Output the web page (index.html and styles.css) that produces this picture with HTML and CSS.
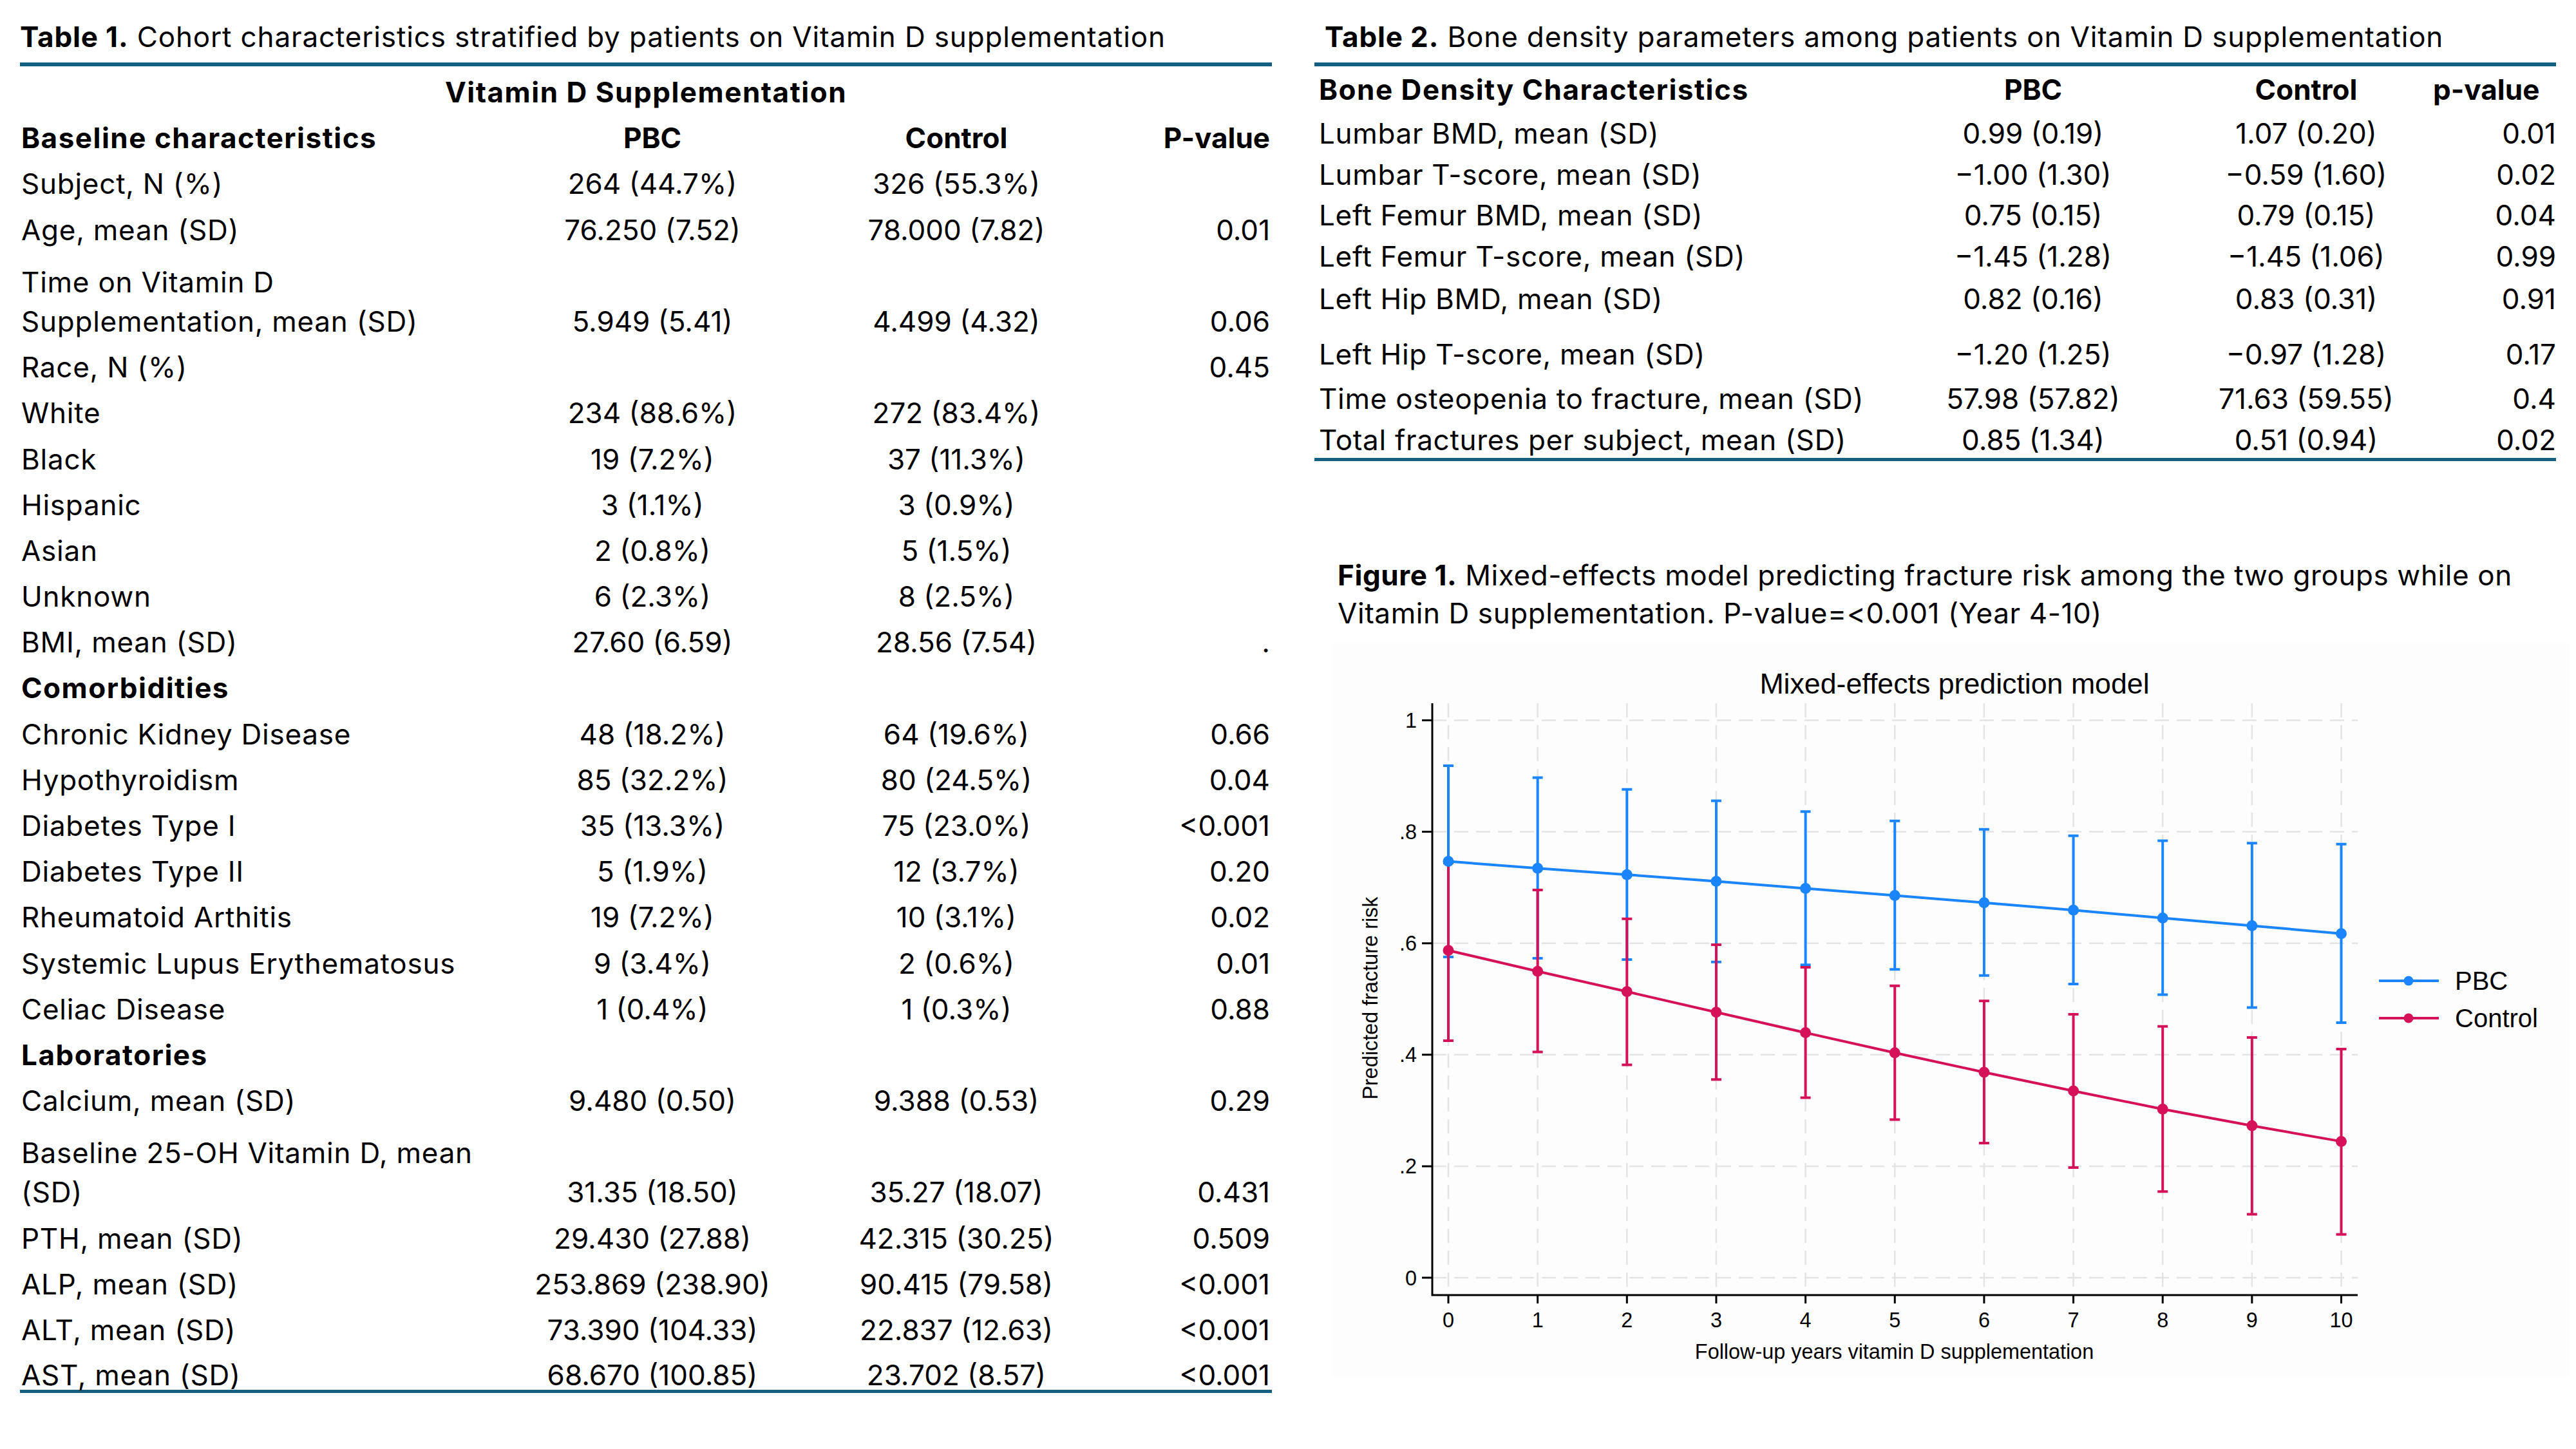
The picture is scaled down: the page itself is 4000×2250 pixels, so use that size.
FILE: index.html
```html
<!DOCTYPE html>
<html lang="en">
<head>
<meta charset="utf-8">
<title>Vitamin D supplementation tables</title>
<link rel="stylesheet" href="styles.css">
</head>
<body>
<div class="page">
  <section class="col1">
    <div class="title"><b>Table 1.</b> Cohort characteristics stratified by patients on Vitamin D supplementation</div>
    <div class="rule t1wrap">
      <table class="t1">
        <colgroup><col class="c1a"><col class="c1b"><col class="c1c"><col class="c1d"></colgroup>
        <tr class="r"><td colspan="4" class="center b vds">Vitamin D Supplementation</td></tr>
        <tr class="r b"><td class="lbl">Baseline characteristics</td><td class="center">PBC</td><td class="center">Control</td><td class="pv">P-value</td></tr>
        <tr class="r"><td class="lbl">Subject, N (%)</td><td class="center">264 (44.7%)</td><td class="center">326 (55.3%)</td><td class="pv"></td></tr>
        <tr class="r"><td class="lbl">Age, mean (SD)</td><td class="center">76.250 (7.52)</td><td class="center">78.000 (7.82)</td><td class="pv">0.01</td></tr>
        <tr class="dbl"><td class="lbl">Time on Vitamin D<br>Supplementation, mean (SD)</td><td class="center">5.949 (5.41)</td><td class="center">4.499 (4.32)</td><td class="pv">0.06</td></tr>
        <tr class="r"><td class="lbl">Race, N (%)</td><td class="center"></td><td class="center"></td><td class="pv">0.45</td></tr>
        <tr class="r"><td class="lbl">White</td><td class="center">234 (88.6%)</td><td class="center">272 (83.4%)</td><td class="pv"></td></tr>
        <tr class="r"><td class="lbl">Black</td><td class="center">19 (7.2%)</td><td class="center">37 (11.3%)</td><td class="pv"></td></tr>
        <tr class="r"><td class="lbl">Hispanic</td><td class="center">3 (1.1%)</td><td class="center">3 (0.9%)</td><td class="pv"></td></tr>
        <tr class="r"><td class="lbl">Asian</td><td class="center">2 (0.8%)</td><td class="center">5 (1.5%)</td><td class="pv"></td></tr>
        <tr class="r"><td class="lbl">Unknown</td><td class="center">6 (2.3%)</td><td class="center">8 (2.5%)</td><td class="pv"></td></tr>
        <tr class="r"><td class="lbl">BMI, mean (SD)</td><td class="center">27.60 (6.59)</td><td class="center">28.56 (7.54)</td><td class="pv">.</td></tr>
        <tr class="r b"><td class="lbl">Comorbidities</td><td></td><td></td><td></td></tr>
        <tr class="r"><td class="lbl">Chronic Kidney Disease</td><td class="center">48 (18.2%)</td><td class="center">64 (19.6%)</td><td class="pv">0.66</td></tr>
        <tr class="r"><td class="lbl">Hypothyroidism</td><td class="center">85 (32.2%)</td><td class="center">80 (24.5%)</td><td class="pv">0.04</td></tr>
        <tr class="r"><td class="lbl">Diabetes Type I</td><td class="center">35 (13.3%)</td><td class="center">75 (23.0%)</td><td class="pv">&lt;0.001</td></tr>
        <tr class="r"><td class="lbl">Diabetes Type II</td><td class="center">5 (1.9%)</td><td class="center">12 (3.7%)</td><td class="pv">0.20</td></tr>
        <tr class="r"><td class="lbl">Rheumatoid Arthitis</td><td class="center">19 (7.2%)</td><td class="center">10 (3.1%)</td><td class="pv">0.02</td></tr>
        <tr class="r"><td class="lbl">Systemic Lupus Erythematosus</td><td class="center">9 (3.4%)</td><td class="center">2 (0.6%)</td><td class="pv">0.01</td></tr>
        <tr class="r"><td class="lbl">Celiac Disease</td><td class="center">1 (0.4%)</td><td class="center">1 (0.3%)</td><td class="pv">0.88</td></tr>
        <tr class="r b"><td class="lbl">Laboratories</td><td></td><td></td><td></td></tr>
        <tr class="r"><td class="lbl">Calcium, mean (SD)</td><td class="center">9.480 (0.50)</td><td class="center">9.388 (0.53)</td><td class="pv">0.29</td></tr>
        <tr class="dbl"><td class="lbl">Baseline 25-OH Vitamin D, mean<br>(SD)</td><td class="center">31.35 (18.50)</td><td class="center">35.27 (18.07)</td><td class="pv">0.431</td></tr>
        <tr class="r"><td class="lbl">PTH, mean (SD)</td><td class="center">29.430 (27.88)</td><td class="center">42.315 (30.25)</td><td class="pv">0.509</td></tr>
        <tr class="r"><td class="lbl">ALP, mean (SD)</td><td class="center">253.869 (238.90)</td><td class="center">90.415 (79.58)</td><td class="pv">&lt;0.001</td></tr>
        <tr class="r"><td class="lbl">ALT, mean (SD)</td><td class="center">73.390 (104.33)</td><td class="center">22.837 (12.63)</td><td class="pv">&lt;0.001</td></tr>
        <tr class="last"><td class="lbl">AST, mean (SD)</td><td class="center">68.670 (100.85)</td><td class="center">23.702 (8.57)</td><td class="pv">&lt;0.001</td></tr>
      </table>
    </div>
  </section>

  <section class="col2">
    <div class="title title2"><b>Table 2.</b> Bone density parameters among patients on Vitamin D supplementation</div>
    <div class="rule t2wrap">
      <table class="t2">
        <colgroup><col class="c2a"><col class="c2b"><col class="c2c"><col class="c2d"></colgroup>
        <tr class="h2 b"><td class="lbl2">Bone Density Characteristics</td><td class="center">PBC</td><td class="center">Control</td><td class="pv2 pvh">p-value</td></tr>
        <tr class="ra"><td class="lbl2">Lumbar BMD, mean (SD)</td><td class="center">0.99 (0.19)</td><td class="center">1.07 (0.20)</td><td class="pv2">0.01</td></tr>
        <tr class="ra"><td class="lbl2">Lumbar T-score, mean (SD)</td><td class="center">&minus;1.00 (1.30)</td><td class="center">&minus;0.59 (1.60)</td><td class="pv2">0.02</td></tr>
        <tr class="rb"><td class="lbl2">Left Femur BMD, mean (SD)</td><td class="center">0.75 (0.15)</td><td class="center">0.79 (0.15)</td><td class="pv2">0.04</td></tr>
        <tr class="rc"><td class="lbl2">Left Femur T-score, mean (SD)</td><td class="center">&minus;1.45 (1.28)</td><td class="center">&minus;1.45 (1.06)</td><td class="pv2">0.99</td></tr>
        <tr class="rc"><td class="lbl2">Left Hip BMD, mean (SD)</td><td class="center">0.82 (0.16)</td><td class="center">0.83 (0.31)</td><td class="pv2">0.91</td></tr>
        <tr class="rd"><td class="lbl2">Left Hip T-score, mean (SD)</td><td class="center">&minus;1.20 (1.25)</td><td class="center">&minus;0.97 (1.28)</td><td class="pv2">0.17</td></tr>
        <tr class="re"><td class="lbl2">Time osteopenia to fracture, mean (SD)</td><td class="center">57.98 (57.82)</td><td class="center">71.63 (59.55)</td><td class="pv2">0.4</td></tr>
        <tr class="rf"><td class="lbl2">Total fractures per subject, mean (SD)</td><td class="center">0.85 (1.34)</td><td class="center">0.51 (0.94)</td><td class="pv2">0.02</td></tr>
      </table>
    </div>

    <p class="caption"><b>Figure 1.</b> Mixed-effects model predicting fracture risk among the two groups while on<br>Vitamin D supplementation. P-value=&lt;0.001 (Year 4-10)</p>

    <svg class="chart" width="1922" height="1140" viewBox="2068 998 1922 1140" xmlns="http://www.w3.org/2000/svg">
      <rect class="chart-bg" x="2068" y="998" width="1922" height="1140"/>
      <text class="ch-title" x="3035" y="1077" text-anchor="middle">Mixed-effects prediction model</text>
      <g class="grid">
        <path d="M2224 1984H3661M2224 1810.9H3661M2224 1637.8H3661M2224 1464.7H3661M2224 1291.6H3661M2224 1118.5H3661"/>
        <path d="M2249 1092V2011M2387.65 1092V2011M2526.3 1092V2011M2664.95 1092V2011M2803.6 1092V2011M2942.25 1092V2011M3080.9 1092V2011M3219.55 1092V2011M3358.2 1092V2011M3496.85 1092V2011M3635.5 1092V2011"/>
      </g>
      <g class="axis">
        <path d="M2224 1092V2012.5M2222.5 2011H3661"/>
        <path d="M2208 1984H2224M2208 1810.9H2224M2208 1637.8H2224M2208 1464.7H2224M2208 1291.6H2224M2208 1118.5H2224"/>
        <path d="M2249 2011V2024M2387.65 2011V2024M2526.3 2011V2024M2664.95 2011V2024M2803.6 2011V2024M2942.25 2011V2024M3080.9 2011V2024M3219.55 2011V2024M3358.2 2011V2024M3496.85 2011V2024M3635.5 2011V2024"/>
      </g>
      <g class="ax-lbl" text-anchor="end">
        <text x="2200" y="1995.5">0</text>
        <text x="2200" y="1822.4">.2</text>
        <text x="2200" y="1649.3">.4</text>
        <text x="2200" y="1476.2">.6</text>
        <text x="2200" y="1303.1">.8</text>
        <text x="2200" y="1130">1</text>
      </g>
      <g class="ax-lbl" text-anchor="middle">
        <text x="2249" y="2061">0</text>
        <text x="2387.65" y="2061">1</text>
        <text x="2526.3" y="2061">2</text>
        <text x="2664.95" y="2061">3</text>
        <text x="2803.6" y="2061">4</text>
        <text x="2942.25" y="2061">5</text>
        <text x="3080.9" y="2061">6</text>
        <text x="3219.55" y="2061">7</text>
        <text x="3358.2" y="2061">8</text>
        <text x="3496.85" y="2061">9</text>
        <text x="3635.5" y="2061">10</text>
        <text x="2941.5" y="2110">Follow-up years vitamin D supplementation</text>
        <text transform="translate(2139 1550) rotate(-90)" x="0" y="0">Predicted fracture risk</text>
      </g>
      <path class="bars pbc-s" d="M2249 1189V1486M2241 1189h16M2241 1486h16
        M2387.65 1207.4V1488M2379.65 1207.4h16M2379.65 1488h16
        M2526.3 1225.8V1489.9M2518.3 1225.8h16M2518.3 1489.9h16
        M2664.95 1243.4V1493.7M2656.95 1243.4h16M2656.95 1493.7h16
        M2803.6 1260.2V1498.3M2795.6 1260.2h16M2795.6 1498.3h16
        M2942.25 1274.8V1505.2M2934.25 1274.8h16M2934.25 1505.2h16
        M3080.9 1287.8V1514.7M3072.9 1287.8h16M3072.9 1514.7h16
        M3219.55 1297.7V1528.1M3211.55 1297.7h16M3211.55 1528.1h16
        M3358.2 1305.4V1544.6M3350.2 1305.4h16M3350.2 1544.6h16
        M3496.85 1309.2V1564.5M3488.85 1309.2h16M3488.85 1564.5h16
        M3635.5 1310.8V1587.9M3627.5 1310.8h16M3627.5 1587.9h16"/>
      <path class="bars ctl-s" d="M2249 1340V1616M2241 1340h16M2241 1616h16
        M2387.65 1382V1633.5M2379.65 1382h16M2379.65 1633.5h16
        M2526.3 1426.7V1653.4M2518.3 1426.7h16M2518.3 1653.4h16
        M2664.95 1466.9V1676.2M2656.95 1466.9h16M2656.95 1676.2h16
        M2803.6 1502V1704.4M2795.6 1502h16M2795.6 1704.4h16
        M2942.25 1530.7V1738.4M2934.25 1530.7h16M2934.25 1738.4h16
        M3080.9 1554.3V1774.9M3072.9 1554.3h16M3072.9 1774.9h16
        M3219.55 1575V1813M3211.55 1575h16M3211.55 1813h16
        M3358.2 1593.7V1850.3M3350.2 1593.7h16M3350.2 1850.3h16
        M3496.85 1611.1V1885.6M3488.85 1611.1h16M3488.85 1885.6h16
        M3635.5 1629V1916.7M3627.5 1629h16M3627.5 1916.7h16"/>
      <polyline class="line pbc-s" points="2249,1337.5 2387.65,1348.3 2526.3,1358.2 2664.95,1368.5 2803.6,1379.6 2942.25,1390.4 3080.9,1401.8 3219.55,1413.3 3358.2,1425.6 3496.85,1437.4 3635.5,1449.7"/>
      <g class="pbc-f">
        <circle cx="2249" cy="1337.5" r="8.5"/><circle cx="2387.65" cy="1348.3" r="8.5"/><circle cx="2526.3" cy="1358.2" r="8.5"/>
        <circle cx="2664.95" cy="1368.5" r="8.5"/><circle cx="2803.6" cy="1379.6" r="8.5"/><circle cx="2942.25" cy="1390.4" r="8.5"/>
        <circle cx="3080.9" cy="1401.8" r="8.5"/><circle cx="3219.55" cy="1413.3" r="8.5"/><circle cx="3358.2" cy="1425.6" r="8.5"/>
        <circle cx="3496.85" cy="1437.4" r="8.5"/><circle cx="3635.5" cy="1449.7" r="8.5"/>
      </g>
      <polyline class="line ctl-s" points="2249,1475.7 2387.65,1508.2 2526.3,1539.8 2664.95,1571.7 2803.6,1603.6 2942.25,1634.7 3080.9,1665 3219.55,1694 3358.2,1722.2 3496.85,1748 3635.5,1772.4"/>
      <g class="ctl-f">
        <circle cx="2249" cy="1475.7" r="8.5"/><circle cx="2387.65" cy="1508.2" r="8.5"/><circle cx="2526.3" cy="1539.8" r="8.5"/>
        <circle cx="2664.95" cy="1571.7" r="8.5"/><circle cx="2803.6" cy="1603.6" r="8.5"/><circle cx="2942.25" cy="1634.7" r="8.5"/>
        <circle cx="3080.9" cy="1665" r="8.5"/><circle cx="3219.55" cy="1694" r="8.5"/><circle cx="3358.2" cy="1722.2" r="8.5"/>
        <circle cx="3496.85" cy="1748" r="8.5"/><circle cx="3635.5" cy="1772.4" r="8.5"/>
      </g>
      <g class="legend">
        <path class="line pbc-s" d="M3694 1523H3787"/>
        <circle class="pbc-f" cx="3740" cy="1523" r="7.5"/>
        <text x="3812" y="1537">PBC</text>
        <path class="line ctl-s" d="M3694 1581H3787"/>
        <circle class="ctl-f" cx="3740" cy="1581" r="7.5"/>
        <text x="3812" y="1595">Control</text>
      </g>
    </svg>
  </section>
</div>
</body>
</html>
```
FILE: styles.css
```css
html, body {
  margin: 0;
  padding: 0;
  background: #ffffff;
}
body {
  width: 4000px;
  height: 2250px;
  overflow: hidden;
  font-family: Inter, "Open Sans", "Liberation Sans", sans-serif;
  font-size: 44px;
  color: #000;
}
.page {
  display: flex;
  align-items: flex-start;
  gap: 66px;
  padding-left: 31px;
}
.col1 { width: 1944px; flex: none; }
.col2 { width: 1928px; flex: none; }

.title {
  box-sizing: border-box;
  height: 97px;
  padding-top: 31px;
  line-height: 53px;
  white-space: nowrap;
  letter-spacing: 0.85px;
}
.title2 { padding-left: 16px; }
.b, .title b, .caption b { font-weight: 700; }

.rule {
  border-top: 6px solid #156082;
  border-bottom: 5px solid #156082;
}
.t1wrap { padding-top: 4.4px; }

table {
  width: 100%;
  border-collapse: collapse;
  table-layout: fixed;
  border-spacing: 0;
}
td {
  padding: 0;
  white-space: nowrap;
  vertical-align: middle;
  line-height: 52px;
}
.center { text-align: center; }
.lbl { padding-left: 2px; letter-spacing: 0.75px; }
.pv { text-align: right; padding-right: 3px; }
.b .lbl, .b .lbl2, .vds { letter-spacing: 1.5px; }

.c1a { width: 749px; }
.c1b { width: 466px; }
.c1c { width: 478px; }
.c1d { width: 251px; }

.t1 tr.r { height: 71.2px; }
.t1 tr.dbl { height: 142.4px; }
.t1 tr.dbl td {
  vertical-align: bottom;
  padding-bottom: 5px;
  line-height: 61px;
}
.t1 tr.last { height: 57.6px; }
.t1 tr.last td {
  vertical-align: top;
  padding-top: 11.6px;
  line-height: 46px;
}

.c2a { width: 889px; }
.c2b { width: 454px; }
.c2c { width: 394px; }
.c2d { width: 191px; }
.lbl2 { padding-left: 7px; letter-spacing: 0.7px; }
.pv2 { text-align: right; padding-right: 0; }
.pvh { padding-right: 30px; }

.t2 tr.h2 { height: 72px; }
.t2 tr.ra { height: 64px; }
.t2 tr.rb { height: 62px; }
.t2 tr.rc { height: 66px; }
.t2 tr.rd { height: 86px; }
.t2 tr.rd td { padding-top: 20px; }
.t2 tr.re { height: 72px; }
.t2 tr.rf { height: 56px; }

.caption {
  margin: 147.5px 0 0 0;
  padding-left: 36px;
  line-height: 59px;
  white-space: nowrap;
  letter-spacing: 0.58px;
}

.chart {
  display: block;
  margin: 16.5px 0 0 27px;
}
.chart-bg { fill: #fdfdfd; }
.chart text {
  font-family: "Liberation Sans", Arial, sans-serif;
  fill: #000;
}
.ch-title { font-size: 44.7px; }
.ax-lbl { font-size: 32.4px; }
.legend text { font-size: 40px; }
.grid path {
  fill: none;
  stroke: #e4e4e4;
  stroke-width: 2.5;
  stroke-dasharray: 22 12;
}
.axis path {
  fill: none;
  stroke: #000;
  stroke-width: 3;
}
.bars, .line {
  fill: none;
  stroke-width: 4;
}
.pbc-s { stroke: #1a85ff; }
.ctl-s { stroke: #d41159; }
.pbc-f { fill: #1a85ff; }
.ctl-f { fill: #d41159; }
```
